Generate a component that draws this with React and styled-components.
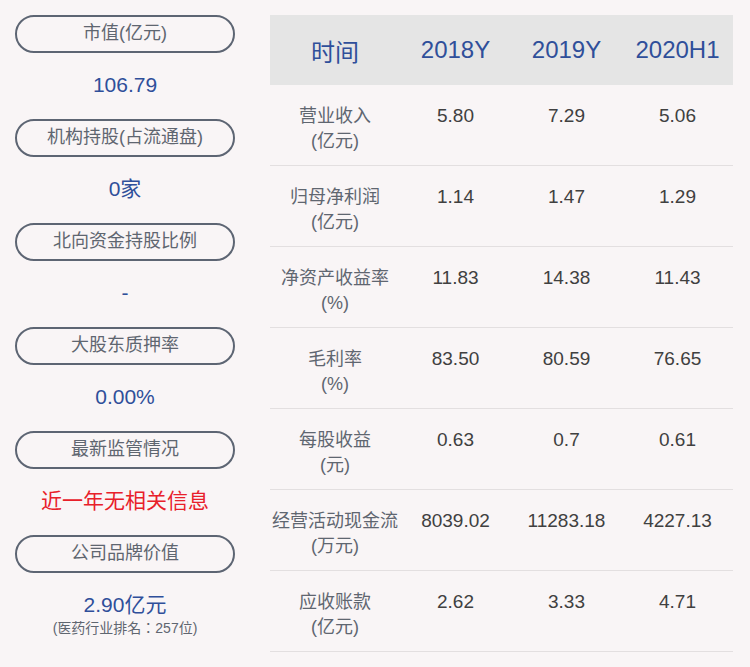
import React from 'react';
import styled, { createGlobalStyle } from 'styled-components';

const GlobalStyle = createGlobalStyle`
  html, body {
    margin: 0;
    padding: 0;
    background: #f9f5f6;
  }
  body {
    font-family: 'Liberation Sans', 'Noto Sans CJK SC', sans-serif;
  }
`;

const summary = [
  { title: '市值(亿元)', value: '106.79' },
  { title: '机构持股(占流通盘)', value: '0家' },
  { title: '北向资金持股比例', value: '-' },
  { title: '大股东质押率', value: '0.00%' },
  { title: '最新监管情况', value: '近一年无相关信息', alert: true },
  { title: '公司品牌价值', value: '2.90亿元', note: '(医药行业排名：257位)' },
];

const years = ['2018Y', '2019Y', '2020H1'];

const rows = [
  { name: '营业收入', unit: '(亿元)', values: ['5.80', '7.29', '5.06'] },
  { name: '归母净利润', unit: '(亿元)', values: ['1.14', '1.47', '1.29'] },
  { name: '净资产收益率', unit: '(%)', values: ['11.83', '14.38', '11.43'] },
  { name: '毛利率', unit: '(%)', values: ['83.50', '80.59', '76.65'] },
  { name: '每股收益', unit: '(元)', values: ['0.63', '0.7', '0.61'] },
  { name: '经营活动现金流', unit: '(万元)', values: ['8039.02', '11283.18', '4227.13'] },
  { name: '应收账款', unit: '(亿元)', values: ['2.62', '3.33', '4.71'] },
];

const App = () => {
  return (
    <>
      <GlobalStyle />
      <Page>
        <Side>
          {summary.map((item) => (
            <Block key={item.title}>
              <Pill>{item.title}</Pill>
              <Value $alert={item.alert}>
                {item.value}
                {item.note && <Note>{item.note}</Note>}
              </Value>
            </Block>
          ))}
        </Side>
        <Table>
          <HeadRow>
            <HeadCell>时间</HeadCell>
            {years.map((y) => (
              <HeadCell key={y}>{y}</HeadCell>
            ))}
          </HeadRow>
          {rows.map((row) => (
            <Row key={row.name}>
              <Label>
                {row.name}
                <br />
                {row.unit}
              </Label>
              {row.values.map((v, i) => (
                <Cell key={i}>{v}</Cell>
              ))}
            </Row>
          ))}
        </Table>
      </Page>
    </>
  );
};

export default App;

const Page = styled.div`
  width: 750px;
  height: 667px;
  display: flex;
  padding: 15px 17px 0 15px;
  box-sizing: border-box;
  gap: 35px;
  overflow: hidden;
`;

const Side = styled.div`
  width: 220px;
  display: flex;
  flex-direction: column;
`;

const Block = styled.div`
  height: 104px;
  display: flex;
  flex-direction: column;
`;

const Pill = styled.div`
  height: 38px;
  box-sizing: border-box;
  border: 2px solid #5d6573;
  border-radius: 19px;
  padding-bottom: 2px;
  display: flex;
  align-items: center;
  justify-content: center;
  color: #5f6670;
  font-size: 18px;
  line-height: 22px;
`;

const Value = styled.div`
  margin-top: 19px;
  text-align: center;
  font-size: 21px;
  line-height: 26px;
  color: ${(p) => (p.$alert ? '#e8202a' : '#2f4f9a')};
`;

const Note = styled.div`
  font-family: 'Liberation Sans', 'Noto Sans CJK TC', sans-serif;
  font-size: 14px;
  line-height: 16px;
  color: #5f6670;
  margin-top: 2px;
`;

const Table = styled.div`
  width: 463px;
  display: flex;
  flex-direction: column;
`;

const cols = `
  display: grid;
  grid-template-columns: 130px 111px 111px 111px;
`;

const HeadRow = styled.div`
  ${cols}
  height: 70px;
  background: #e5e5e5;
  align-items: center;
`;

const HeadCell = styled.div`
  text-align: center;
  font-size: 24px;
  color: #2f4f9a;
`;

const Row = styled.div`
  ${cols}
  height: 81px;
  box-sizing: border-box;
  border-bottom: 1.5px solid #e3dfe0;
  padding-top: 18px;
  align-items: start;
`;

const Label = styled.div`
  text-align: center;
  font-size: 18px;
  line-height: 25px;
  color: #5f6670;
  margin-top: 1px;
`;

const Cell = styled.div`
  text-align: center;
  font-size: 19px;
  line-height: 25px;
  color: #404040;
`;
